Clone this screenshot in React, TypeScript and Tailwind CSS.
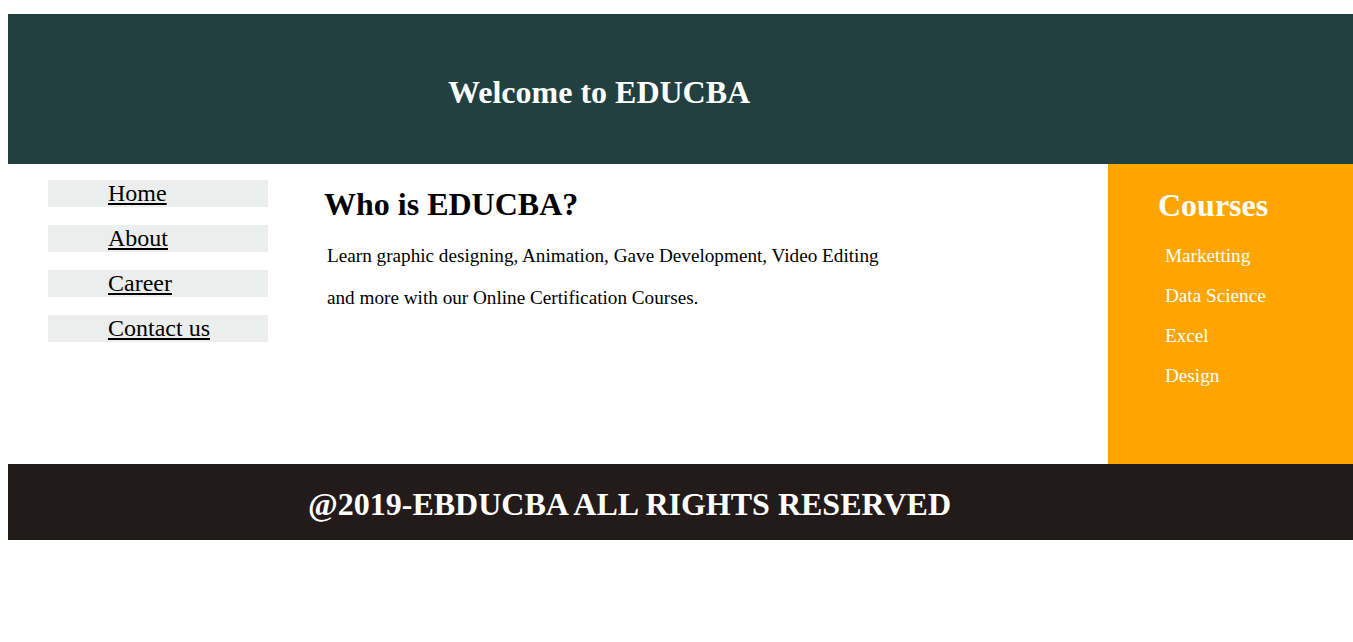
const navItems = ["Home", "About", "Career", "Contact us"];
const courses = ["Marketting", "Data Science", "Excel", "Design"];

export default function App() {
  return (
    <div className="bg-white min-h-screen pt-[14px] font-['Liberation_Serif',serif] text-black">
      <div className="ml-[8px] w-[1345px]">
        {/* Header */}
        <header className="h-[150px] bg-[#224040] pt-[60px] pl-[440px]">
          <h1 className="text-[32px] leading-[36px] font-bold text-white">Welcome to EDUCBA</h1>
        </header>

        {/* Body row */}
        <div className="flex h-[300px]">
          <nav className="ml-[40px] w-[220px] pt-[16px] flex flex-col gap-[18px]">
            {navItems.map((item) => (
              <div key={item} className="h-[27px] bg-[#eceeed] pl-[60px]">
                <a href="#" className="text-[24px] leading-[27px] underline text-black">
                  {item}
                </a>
              </div>
            ))}
          </nav>

          <main className="flex-1 pl-[56px] pt-[22px]">
            <h2 className="text-[32px] leading-[36px] font-bold">Who is EDUCBA?</h2>
            <p className="mt-[13px] ml-[3px] w-[570px] text-[19.2px] leading-[42px]">
              Learn graphic designing, Animation, Gave Development, Video Editing and more with our
              Online Certification Courses.
            </p>
          </main>

          <aside className="w-[245px] bg-[#ffa500] pl-[50px] pt-[23px] text-white">
            <h2 className="text-[32px] leading-[36px] font-bold">Courses</h2>
            <ul className="mt-[13px] ml-[7px]">
              {courses.map((c) => (
                <li key={c} className="text-[19.2px] leading-[40px]">
                  {c}
                </li>
              ))}
            </ul>
          </aside>
        </div>

        {/* Footer */}
        <footer className="h-[76px] bg-[#231a1a] pt-[22px] pl-[300px]">
          <h2 className="text-[32px] leading-[36px] font-bold text-white">
            @2019-EBDUCBA ALL RIGHTS RESERVED
          </h2>
        </footer>
      </div>
    </div>
  );
}
